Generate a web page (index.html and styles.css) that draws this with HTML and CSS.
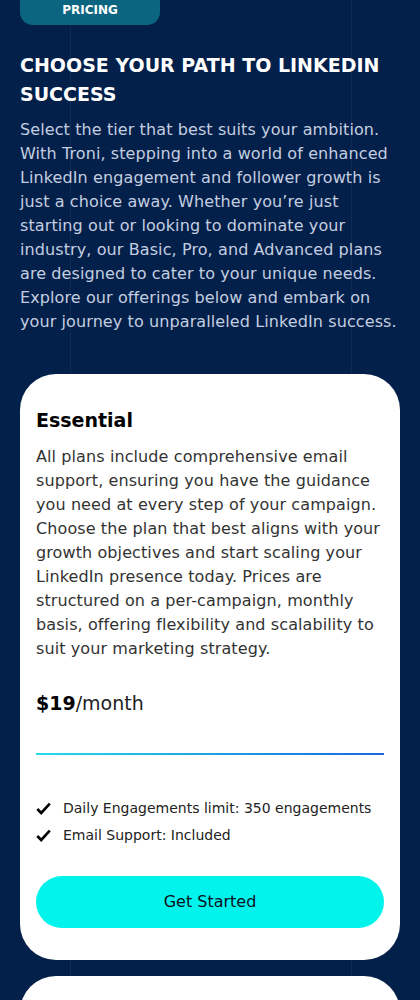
FILE: index.html
```html
<!DOCTYPE html>
<html lang="en">
	<head>
		<meta charset="utf-8">
		<title>Troni - Pricing</title>
		<link rel="stylesheet" href="styles.css">
	</head>
	<body>
		<div class="grid-lines"></div>
		<section class="pricing">
			<div class="badge">PRICING</div>
			<h1>CHOOSE YOUR PATH TO LINKEDIN SUCCESS</h1>
			<p class="intro">Select the tier that best suits your ambition. With Troni, stepping into a world of enhanced LinkedIn engagement and follower growth is just a choice away. Whether you’re just starting out or looking to dominate your industry, our Basic, Pro, and Advanced plans are designed to cater to your unique needs. Explore our offerings below and embark on your journey to unparalleled LinkedIn success.</p>

			<div class="plans">
				<div class="plan">
					<h2>Essential</h2>
					<p class="plan-text">All plans include comprehensive email support, ensuring you have the guidance you need at every step of your campaign. Choose the plan that best aligns with your growth objectives and start scaling your LinkedIn presence today. Prices are structured on a per-campaign, monthly basis, offering flexibility and scalability to suit your marketing strategy.</p>
					<div class="price"><b>$19</b>/month</div>
					<div class="divider"></div>
					<ul class="features">
						<li>
							<svg width="15" height="13" viewBox="0 0 15 13"><path d="M1.3 7 L5.2 11 L13.8 1.6" fill="none" stroke="#000" stroke-width="2.6"/></svg>
							Daily Engagements limit: 350 engagements
						</li>
						<li>
							<svg width="15" height="13" viewBox="0 0 15 13"><path d="M1.3 7 L5.2 11 L13.8 1.6" fill="none" stroke="#000" stroke-width="2.6"/></svg>
							Email Support: Included
						</li>
					</ul>
					<a class="btn" href="#">Get Started</a>
				</div>
				<div class="plan"></div>
			</div>
		</section>
	</body>
</html>
```

FILE: styles.css
```css
body {
	margin: 0;
	background: #03204a;
	font-family: "DejaVu Sans", sans-serif;
	overflow: hidden;
}
.grid-lines {
	position: absolute;
	top: 0;
	left: 70px;
	width: 280px;
	height: 1000px;
	border-left: 1px solid rgba(255,255,255,0.05);
	border-right: 1px solid rgba(255,255,255,0.05);
	pointer-events: none;
}
.pricing {
	position: relative;
	padding: 0 20px;
}
.badge {
	width: 140px;
	height: 37px;
	margin-top: -12px;
	border-radius: 13px;
	background: #0b6581;
	color: #fff;
	font-size: 12px;
	font-weight: bold;
	text-align: center;
	line-height: 25px;
	padding-top: 10px;
	box-sizing: border-box;
}
h1 {
	margin: 26px 0 0;
	color: #fff;
	font-size: 19px;
	line-height: 29px;
	font-weight: bold;
}
.intro {
	margin: 9px 0 0;
	color: #c3cee0;
	font-size: 16px;
	letter-spacing: 0.1px;
	line-height: 24px;
}
.plans {
	margin-top: 40px;
	display: flex;
	flex-direction: column;
	gap: 16px;
}
.plan {
	background: #fff;
	border-radius: 36px;
	padding: 30px 16px 32px;
	min-height: 100px;
}
.plan h2 {
	margin: 0;
	font-size: 19px;
	font-weight: bold;
	color: #000;
	line-height: 32px;
}
.plan-text {
	margin: 9px 0 0;
	color: #333;
	font-size: 16px;
	letter-spacing: 0.1px;
	line-height: 24px;
}
.price {
	margin-top: 28px;
	font-size: 19px;
	color: #222;
	line-height: 28px;
}
.price b {
	color: #000;
}
.divider {
	margin-top: 36px;
	height: 2px;
	background: linear-gradient(90deg, #22dde6, #1a66e0);
}
.features {
	list-style: none;
	margin: 40px 0 0;
	padding: 0;
}
.features li {
	display: flex;
	align-items: center;
	gap: 12px;
	font-size: 14px;
	color: #222;
	line-height: 27px;
}
.btn {
	display: block;
	margin-top: 27px;
	height: 52px;
	line-height: 52px;
	border-radius: 26px;
	background: #00f4ec;
	color: #0a1020;
	text-align: center;
	text-decoration: none;
	font-size: 16px;
	font-weight: 500;
}
```
